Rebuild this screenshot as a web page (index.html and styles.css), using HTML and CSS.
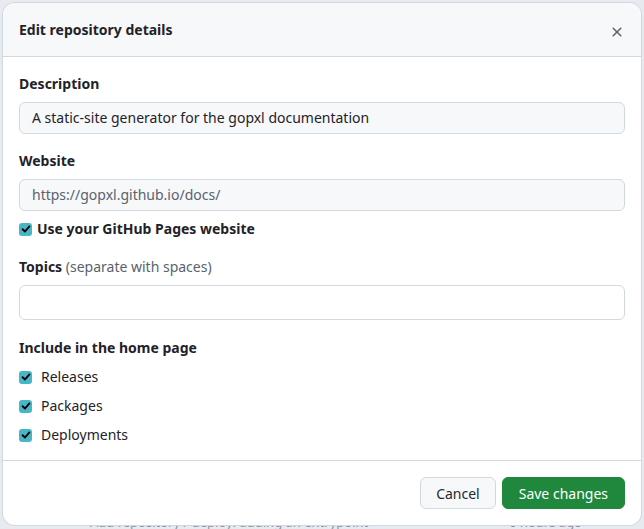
FILE: index.html
```html
<!DOCTYPE html>
<html lang="en">
<head>
<meta charset="utf-8">
<title>Edit repository details</title>
<link rel="stylesheet" href="styles.css">
</head>
<body>
<div class="page">
  <div class="page-row">
    <span class="page-msg">Add repository / deploy: adding an entrypoint</span>
    <span class="page-time">6 hours ago</span>
  </div>
</div>
<div class="backdrop">
  <div class="dialog">
    <header class="dialog-header">
      <h1 class="dialog-title">Edit repository details</h1>
      <button class="close-btn" aria-label="Close">
        <svg width="16" height="16" viewBox="0 0 16 16" fill="currentColor"><path d="M3.72 3.72a.75.75 0 0 1 1.06 0L8 6.94l3.22-3.22a.749.749 0 0 1 1.275.326.749.749 0 0 1-.215.734L9.06 8l3.22 3.22a.749.749 0 0 1-.326 1.275.749.749 0 0 1-.734-.215L8 9.06l-3.220 3.22a.751.751 0 0 1-1.042-.018.751.751 0 0 1-.018-1.042L6.94 8 3.72 4.78a.75.75 0 0 1 0-1.06Z"/></svg>
      </button>
    </header>
    <div class="dialog-body">
      <div class="field">
        <label class="label">Description</label>
        <div class="input input-muted">A static-site generator for the gopxl documentation</div>
      </div>
      <div class="field">
        <label class="label">Website</label>
        <div class="input input-muted input-placeholder">https://gopxl.github.io/docs/</div>
        <div class="check-row check-strong">
          <span class="check"><svg width="10" height="10" viewBox="0 0 10 10"><path d="M1.6 5.2 L4 7.5 L8.4 2.4" fill="none" stroke="#000" stroke-width="1.9" stroke-linecap="round" stroke-linejoin="round"/></svg></span>
          <span>Use your GitHub Pages website</span>
        </div>
      </div>
      <div class="field">
        <label class="label">Topics <span class="note">(separate with spaces)</span></label>
        <div class="input input-tall"></div>
      </div>
      <div class="field">
        <div class="label label-group">Include in the home page</div>
        <div class="check-list">
          <div class="check-row">
            <span class="check"><svg width="10" height="10" viewBox="0 0 10 10"><path d="M1.6 5.2 L4 7.5 L8.4 2.4" fill="none" stroke="#000" stroke-width="1.9" stroke-linecap="round" stroke-linejoin="round"/></svg></span>
            <span>Releases</span>
          </div>
          <div class="check-row">
            <span class="check"><svg width="10" height="10" viewBox="0 0 10 10"><path d="M1.6 5.2 L4 7.5 L8.4 2.4" fill="none" stroke="#000" stroke-width="1.9" stroke-linecap="round" stroke-linejoin="round"/></svg></span>
            <span>Packages</span>
          </div>
          <div class="check-row">
            <span class="check"><svg width="10" height="10" viewBox="0 0 10 10"><path d="M1.6 5.2 L4 7.5 L8.4 2.4" fill="none" stroke="#000" stroke-width="1.9" stroke-linecap="round" stroke-linejoin="round"/></svg></span>
            <span>Deployments</span>
          </div>
        </div>
      </div>
    </div>
    <footer class="dialog-footer">
      <button class="btn btn-cancel">Cancel</button>
      <button class="btn btn-primary">Save changes</button>
    </footer>
  </div>
</div>
</body>
</html>
```
FILE: styles.css
```css
* { box-sizing: border-box; }
html, body { margin: 0; padding: 0; }
body {
  width: 644px;
  height: 529px;
  overflow: hidden;
  font-family: "Noto Sans", "Open Sans", sans-serif;
  font-size: 14px;
  line-height: 20px;
  color: #1f2328;
  background: #e7eaee;
}
.page {
  height: 529px;
  padding-top: 514px;
  padding-left: 90px;
  color: #8c959f;
  font-size: 13px;
  line-height: 16px;
}
.page-row {
  display: flex;
  width: 492px;
  justify-content: space-between;
}
.backdrop {
  position: absolute;
  inset: 0;
}
.dialog {
  position: absolute;
  left: 3px;
  top: 3px;
  width: 638px;
  background: #ffffff;
  border-radius: 12px;
  box-shadow: 0 0 0 1px #d1d9e0;
  overflow: hidden;
}
.dialog-header {
  height: 54px;
  display: flex;
  align-items: center;
  justify-content: space-between;
  padding: 0 16px 0 16px;
  background: #f6f8fa;
  border-bottom: 1px solid #d1d9e0;
}
.dialog-title {
  margin: 0;
  font-size: 14px;
  font-weight: 700;
  line-height: 20px;
}
.close-btn {
  border: 0;
  background: transparent;
  padding: 0;
  width: 16px;
  height: 16px;
  margin-top: 4px;
  color: #59636e;
  display: flex;
}
.dialog-body {
  padding: 17px 16px 15px;
  display: flex;
  flex-direction: column;
  gap: 18px;
}
.field {
  display: flex;
  flex-direction: column;
}
.field:first-child { margin-bottom: -1px; }
.label {
  font-weight: 700;
  margin-bottom: 8px;
}
.label-group { margin-bottom: 9px; }
.note {
  font-weight: 400;
  color: #59636e;
}
.input {
  height: 32px;
  border: 1px solid #d1d9e0;
  border-radius: 6px;
  padding: 5px 12px;
  background: #ffffff;
  white-space: nowrap;
}
.input-muted { background: #f6f8fa; }
.input-placeholder { color: #59636e; }
.input-tall { height: 35px; }
.check-row {
  display: flex;
  align-items: center;
  gap: 9px;
  margin-top: 8px;
}
.check-strong { font-weight: 700; gap: 5px; }
.check {
  width: 13px;
  height: 13px;
  border-radius: 3px;
  background: #47b6c7;
  display: flex;
  align-items: center;
  justify-content: center;
}
.check-list {
  display: flex;
  flex-direction: column;
  gap: 9px;
}
.check-list .check-row { margin-top: 0; }
.dialog-footer {
  border-top: 1px solid #d1d9e0;
  padding: 16px;
  display: flex;
  justify-content: flex-end;
  gap: 6px;
}
.btn {
  height: 32px;
  padding: 0 16px;
  border: 1px solid #d1d9e0;
  border-radius: 6px;
  background: #f6f8fa;
  color: #25292e;
  font-family: inherit;
  font-size: 14px;
}
.btn-cancel { padding: 0 15px; }
.btn-primary {
  background: #1f883d;
  border-color: #1f883d;
  color: #ffffff;
}
```
